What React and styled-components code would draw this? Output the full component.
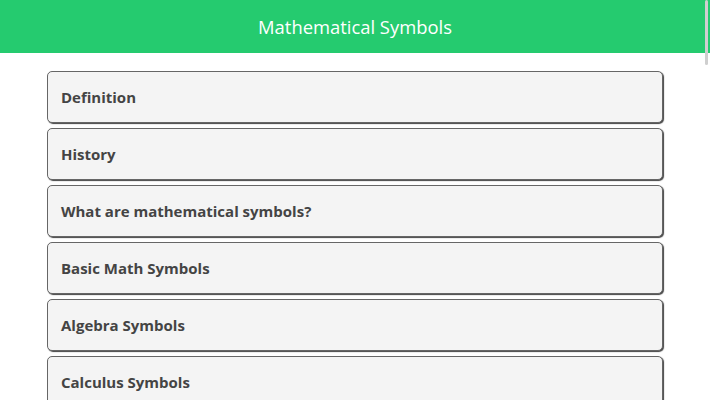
import React from 'react';
import styled, { createGlobalStyle } from 'styled-components';

const GlobalStyle = createGlobalStyle`
html, body {
    margin: 0;
    padding: 0;
    background: #fff;
    font-family: "Open Sans", "DejaVu Sans", sans-serif;
}
`

const Header = styled.header`
display: flex;
align-items: center;
justify-content: center;
height: 53px;
background: #25cb6f;
color: #fff;
font-size: 18.4px;
`

const ScrollThumb = styled.div`
position: fixed;
top: 0;
right: 2px;
width: 3px;
height: 65px;
border-radius: 2px;
background: #cfcfcf;
`

const List = styled.div`
display: flex;
flex-direction: column;
gap: 5px;
width: 616px;
margin: 18px auto 0;
`

const Item = styled.div`
display: flex;
align-items: center;
height: 50px;
padding: 0 13px;
background: #f4f4f4;
border: 1px solid #666;
border-radius: 5px;
box-shadow: 1px 1px 1px #444;
color: #444;
font-weight: 700;
font-size: 15px;
`

const topics = [
    'Definition',
    'History',
    'What are mathematical symbols?',
    'Basic Math Symbols',
    'Algebra Symbols',
    'Calculus Symbols',
];

export default function App() {
    return <>
        <GlobalStyle />
        <Header>Mathematical Symbols</Header>
        <List>
            {topics.map(t => <Item key={t}>{t}</Item>)}
        </List>
        <ScrollThumb />
    </>
}
